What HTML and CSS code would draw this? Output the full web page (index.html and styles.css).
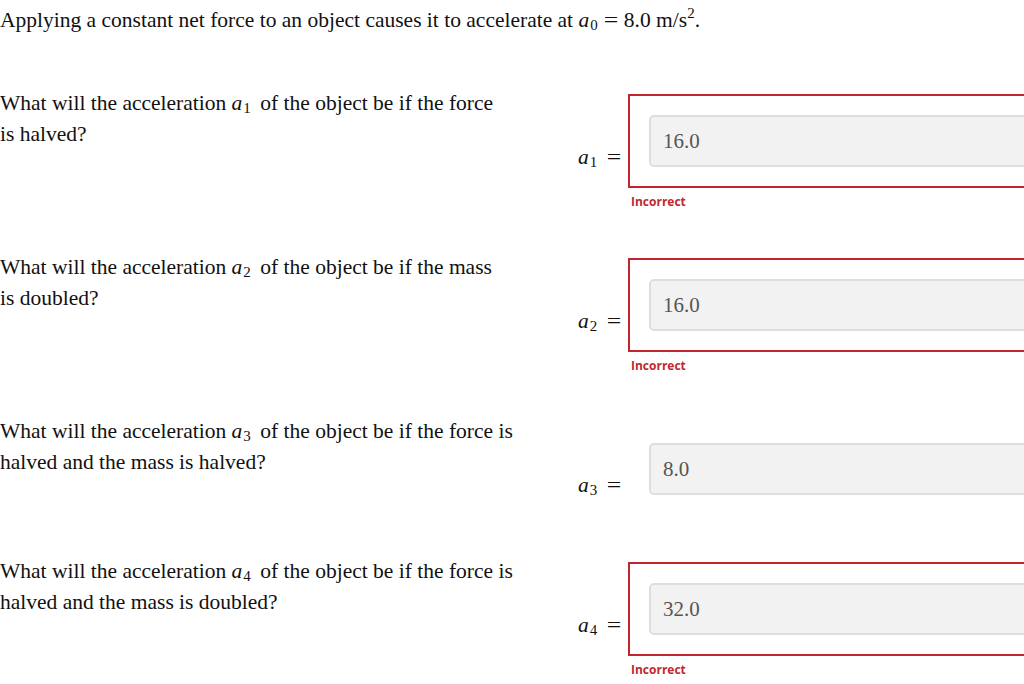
FILE: index.html
```
<!DOCTYPE html>
<html>
<head>
	<meta charset="UTF-8">
	<meta name="viewport" content="width=device-width, initial-scale=1.0">
	<title>Net Force and Acceleration</title>
	<link rel="stylesheet" href="styles.css">
</head>
<body>
	<p class="intro">Applying a constant net force to an object causes it to accelerate at <span class="math"><i>a</i><sub>0</sub><span class="eq">=</span>8.0&nbsp;m/s<sup>2</sup></span>.</p>

	<div class="question">
		<p class="prompt narrow">What will the acceleration <span class="math"><i>a</i><sub>1</sub></span> of the object be if the force is halved?</p>
		<div class="answer">
			<div class="answer-line">
				<span class="label"><i>a</i><sub>1</sub><span class="eq">=</span></span>
				<div class="answer-box incorrect">
					<input class="answer-input" type="text" value="16.0" readonly>
				</div>
			</div>
			<div class="feedback">Incorrect</div>
		</div>
	</div>

	<div class="question">
		<p class="prompt narrow">What will the acceleration <span class="math"><i>a</i><sub>2</sub></span> of the object be if the mass is doubled?</p>
		<div class="answer">
			<div class="answer-line">
				<span class="label"><i>a</i><sub>2</sub><span class="eq">=</span></span>
				<div class="answer-box incorrect">
					<input class="answer-input" type="text" value="16.0" readonly>
				</div>
			</div>
			<div class="feedback">Incorrect</div>
		</div>
	</div>

	<div class="question">
		<p class="prompt">What will the acceleration <span class="math"><i>a</i><sub>3</sub></span> of the object be if the force is halved and the mass is halved?</p>
		<div class="answer">
			<div class="answer-line">
				<span class="label"><i>a</i><sub>3</sub><span class="eq">=</span></span>
				<div class="answer-box">
					<input class="answer-input" type="text" value="8.0" readonly>
				</div>
			</div>
		</div>
	</div>

	<div class="question">
		<p class="prompt">What will the acceleration <span class="math"><i>a</i><sub>4</sub></span> of the object be if the force is halved and the mass is doubled?</p>
		<div class="answer">
			<div class="answer-line">
				<span class="label"><i>a</i><sub>4</sub><span class="eq">=</span></span>
				<div class="answer-box incorrect">
					<input class="answer-input" type="text" value="32.0" readonly>
				</div>
			</div>
			<div class="feedback">Incorrect</div>
		</div>
	</div>
</body>
</html>
```

FILE: styles.css
```
body {
	font-family: 'Liberation Serif', 'Times New Roman', serif;
	font-size: 21.5px;
	color: #111;
	background-color: #fff;
	margin: 0;
	padding: 0;
	overflow: hidden;
}

.intro {
	margin: 0;
	padding-top: 5px;
	line-height: 31px;
	white-space: nowrap;
}

.prompt .math {
	margin-right: 4px;
}

.math i,
.label i {
	font-style: italic;
}

.math sub,
.label sub {
	font-size: 15px;
	vertical-align: -3px;
	line-height: 0;
	margin-left: 1px;
}

.math sup {
	font-size: 15px;
	vertical-align: 9px;
	line-height: 0;
}

.eq {
	display: inline-block;
	margin: 0 7px 0 7px;
	transform: scaleX(1.2);
}

.question {
	display: grid;
	grid-template-columns: 520px auto;
	column-gap: 58px;
	align-items: start;
	margin-bottom: 40px;
}

.intro + .question {
	margin-top: 52px;
}

.prompt {
	margin: 0;
	line-height: 31px;
}

.prompt.narrow {
	max-width: 500px;
}

.answer {
	margin-top: 6px;
}

.answer-line {
	display: flex;
	align-items: flex-end;
}

.label {
	width: 50px;
	flex-shrink: 0;
	line-height: 24px;
	margin-bottom: 19px;
	white-space: nowrap;
}

.label .eq {
	margin: 0 7px 0 11px;
}

.answer-box {
	width: 460px;
	flex-shrink: 0;
	padding: 19px;
	border: 2px solid transparent;
}

.answer-box.incorrect {
	border-color: #c1272d;
}

.answer-input {
	display: block;
	box-sizing: border-box;
	width: 100%;
	height: 52px;
	margin: 0;
	padding: 0 12px;
	border: 2px solid #dedede;
	border-radius: 5px;
	background-color: #f2f2f2;
	color: #555;
	font-family: 'Liberation Serif', 'Times New Roman', serif;
	font-size: 21px;
	outline: none;
}

.feedback {
	box-sizing: border-box;
	height: 24px;
	padding-top: 4px;
	line-height: 20px;
	margin-left: 3px;
	margin-left: 53px;
	font-family: 'Open Sans', sans-serif;
	font-size: 12px;
	font-weight: 700;
	color: #c1272d;
}
```
